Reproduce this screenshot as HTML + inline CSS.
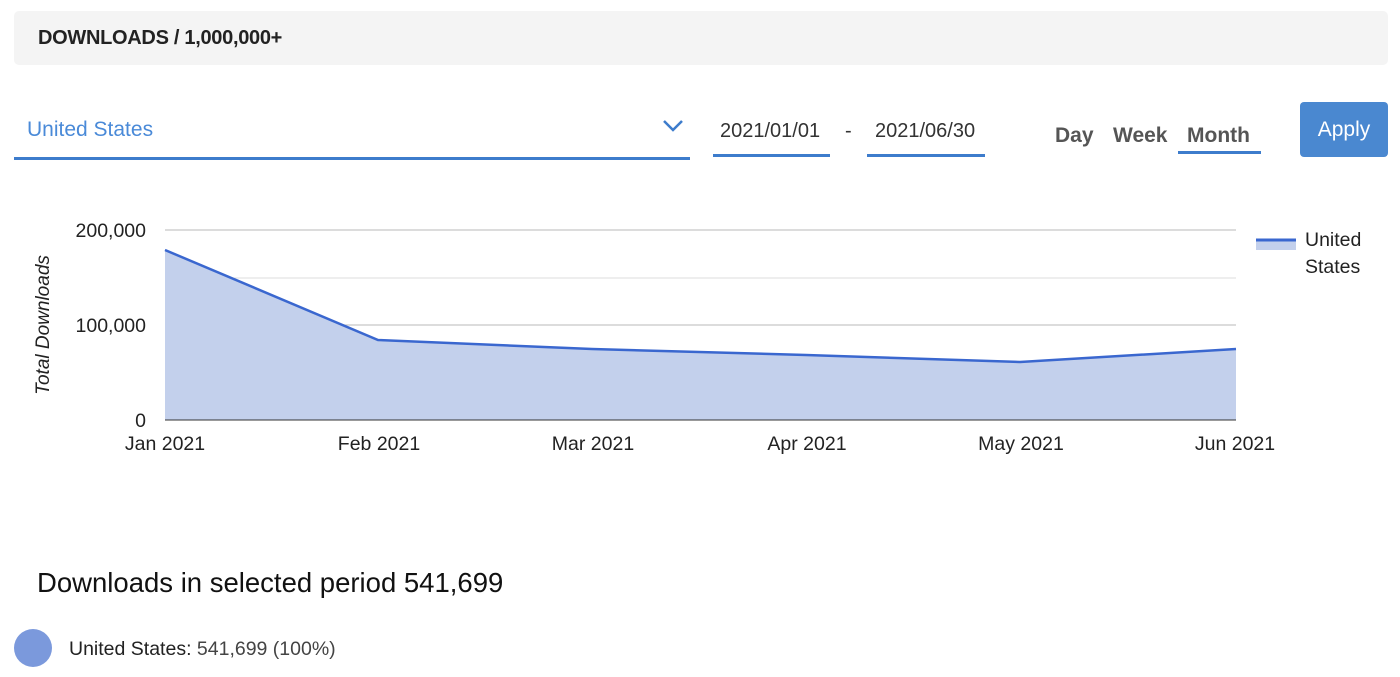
<!DOCTYPE html>
<html><head><meta charset="utf-8"><style>
body{margin:0;width:1400px;height:677px;background:#fff;font-family:"Liberation Sans",Arial,sans-serif;position:relative;overflow:hidden}
.abs{position:absolute}
</style></head><body>
<div class="abs" style="left:14px;top:11px;width:1374px;height:54px;background:#f4f4f4;border-radius:5px"></div>
<div class="abs" style="left:38px;top:27px;font-size:20px;font-weight:bold;color:#222;letter-spacing:-0.3px">DOWNLOADS / 1,000,000+</div>

<div class="abs" style="left:27px;top:118px;font-size:21px;color:#4a8ad8">United States</div>
<svg class="abs" style="left:662px;top:119px" width="22" height="14"><path d="M2 2 L11 11 L20 2" fill="none" stroke="#3d7ccc" stroke-width="2.5"/></svg>
<div class="abs" style="left:14px;top:157px;width:676px;height:3px;background:#3d7ccc"></div>

<div class="abs" style="left:720px;top:120px;font-size:20px;color:#333">2021/01/01</div>
<div class="abs" style="left:713px;top:154px;width:117px;height:3px;background:#3d7ccc"></div>
<div class="abs" style="left:845px;top:120px;font-size:20px;color:#333">-</div>
<div class="abs" style="left:875px;top:120px;font-size:20px;color:#333">2021/06/30</div>
<div class="abs" style="left:867px;top:154px;width:118px;height:3px;background:#3d7ccc"></div>

<div class="abs" style="left:1055px;top:124px;font-size:21px;font-weight:bold;color:#555">Day</div>
<div class="abs" style="left:1113px;top:124px;font-size:21px;font-weight:bold;color:#555">Week</div>
<div class="abs" style="left:1187px;top:124px;font-size:21px;font-weight:bold;color:#555">Month</div>
<div class="abs" style="left:1178px;top:151px;width:83px;height:3px;background:#3d7ccc"></div>

<div class="abs" style="left:1300px;top:102px;width:88px;height:55px;background:#4a88d0;border-radius:4px;color:#fff;font-size:21px;text-align:center;line-height:55px">Apply</div>

<svg class="abs" style="left:0;top:0" width="1400" height="677">
<g stroke="#ddd" stroke-width="1"><line x1="165" y1="278" x2="1236" y2="278"/><line x1="165" y1="372" x2="1236" y2="372"/></g>
<g stroke="#c8c8c8" stroke-width="1.2"><line x1="165" y1="230" x2="1236" y2="230"/><line x1="165" y1="325" x2="1236" y2="325"/></g>
<polygon points="165,250 378,340 592,349 806,355 1020,362 1236,349 1236,420 165,420" fill="#c3d0ec"/>
<polyline points="165,250 378,340 592,349 806,355 1020,362 1236,349" fill="none" stroke="#3a67cf" stroke-width="2.5"/>
<line x1="165" y1="420" x2="1236" y2="420" stroke="#333" stroke-width="1"/>
<g font-size="19.5" fill="#222" text-anchor="end" font-family="Liberation Sans,Arial,sans-serif">
<text x="146" y="237">200,000</text><text x="146" y="332">100,000</text><text x="146" y="427">0</text></g>
<g font-size="19.5" fill="#222" text-anchor="middle" font-family="Liberation Sans,Arial,sans-serif">
<text x="165" y="450">Jan 2021</text><text x="379" y="450">Feb 2021</text><text x="593" y="450">Mar 2021</text><text x="807" y="450">Apr 2021</text><text x="1021" y="450">May 2021</text><text x="1235" y="450">Jun 2021</text></g>
<text transform="translate(49,325) rotate(-90)" text-anchor="middle" font-size="19" font-style="italic" fill="#222" font-family="Liberation Sans,Arial,sans-serif">Total Downloads</text>
<rect x="1256" y="240" width="40" height="10" fill="#c3d0ec"/>
<line x1="1256" y1="240" x2="1296" y2="240" stroke="#3a67cf" stroke-width="3"/>
<g font-size="19.5" fill="#222" font-family="Liberation Sans,Arial,sans-serif"><text x="1305" y="246">United</text><text x="1305" y="273">States</text></g>
<circle cx="33" cy="648" r="19" fill="#7b99dc"/>
</svg>

<div class="abs" style="left:37px;top:567px;font-size:27.5px;color:#111">Downloads in selected period 541,699</div>
<div class="abs" style="left:69px;top:638px;font-size:19.5px;color:#222">United States: <span style="color:#444">541,699 (100%)</span></div>
</body></html>
